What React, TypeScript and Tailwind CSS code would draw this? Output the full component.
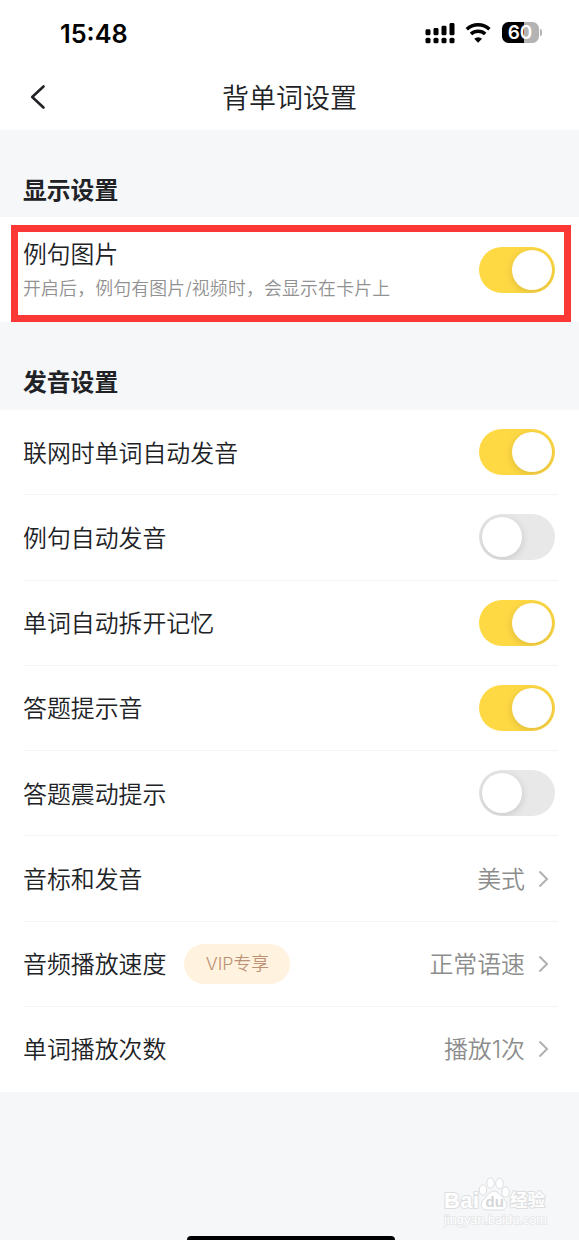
import React, { useState } from "react";

type SettingRow = {
    label: string;
    enabled?: boolean;
    value?: string;
    badge?: string;
};

const rows: SettingRow[] = [
    { label: "联网时单词自动发音", enabled: true },
    { label: "例句自动发音", enabled: false },
    { label: "单词自动拆开记忆", enabled: true },
    { label: "答题提示音", enabled: true },
    { label: "答题震动提示", enabled: false },
    { label: "音标和发音", value: "美式" },
    { label: "音频播放速度", value: "正常语速", badge: "VIP专享" },
    { label: "单词播放次数", value: "播放1次" },
];

// Signal, wifi and battery
function StatusIcons() {
    return (
        <div className="flex items-center">
            <svg width="30" height="22" viewBox="0 0 30 22">
                {[0, 8, 16, 24].map((x, i) => (
                    <g key={x}>
                        <rect x={x + 0.5} y={[7.3, 6, 3.7, 1][i]} width="5" height={[6, 7.3, 9.6, 12.3][i]} rx="1.4" />
                        <rect x={x + 0.5} y="15.7" width="5" height="5.6" rx="1.6" />
                    </g>
                ))}
            </svg>
            <svg className="ml-[10px]" width="27" height="22" viewBox="0 0 27 22" fill="none" stroke="#000" strokeWidth="3.5">
                <path d="M1.8 7.3a16.5 16.5 0 0 1 22.6 0" />
                <path d="M6 12.1a10.3 10.3 0 0 1 14.2 0" />
                <path d="M13.1 20.8l-3.9-4.1a5.7 5.7 0 0 1 7.8 0z" fill="#000" stroke="none" />
            </svg>
            <div className="ml-[10px] flex h-[21px] w-[37px] items-center justify-center rounded-[6.5px] bg-linear-to-r from-black from-60% to-[#b3b3b3] to-60% pr-px font-['Inter',sans-serif] text-[19px] font-semibold leading-none text-white">
                60
            </div>
            <div className="ml-[1px] h-[7px] w-[2px] rounded-r-full bg-[#b3b3b3]" />
        </div>
    );
}

function Toggle({ initial }: { initial: boolean }) {
    const [on, setOn] = useState<boolean>(initial);

    return (
        <button
            role="switch"
            aria-checked={on}
            onClick={() => setOn(!on)}
            className={`flex h-[46px] w-[76px] items-center overflow-hidden rounded-full px-[3px] ${on ? "justify-end bg-[#ffd944]" : "justify-start bg-[#e8e8e8]"}`}
        >
            <span className="h-[40px] w-[40px] rounded-full bg-white shadow-[0_2px_8px_rgba(0,0,0,0.15)]" />
        </button>
    );
}

function SectionTitle({ text }: { text: string }) {
    return <h2 className="pl-[23px] text-[23.8px] font-bold leading-[36px] text-[#202226]">{text}</h2>;
}

function Row({ row, last }: { row: SettingRow; last: boolean }) {
    return (
        <div className={`ml-[23px] mr-[21px] flex h-[85.25px] items-center border-b ${last ? "border-transparent" : "border-[#f3f3f3]"}`}>
            <span className="pt-[3px] text-[23.9px]">{row.label}</span>
            {row.badge ? (
                <span className="ml-[18px] flex h-[40px] w-[106px] items-center justify-center rounded-full bg-[#fff3df] pt-px text-[17.8px] text-[#bd9175]">
                    {row.badge}
                </span>
            ) : null}
            {row.value ? (
                <div className="ml-auto mr-[9px] flex items-center text-[23.9px] text-[#8c8c8c]">
                    <span className="pt-[3px]">{row.value}</span>
                    <svg className="ml-[13px] mt-px" width="11" height="18" viewBox="0 0 11 18" fill="none" stroke="#b0b0b0" strokeWidth="2">
                        <path d="M1.5 1.5L9 9l-7.5 7.5" />
                    </svg>
                </div>
            ) : (
                <div className="ml-auto mr-[3px]">
                    <Toggle initial={row.enabled ?? false} />
                </div>
            )}
        </div>
    );
}

function Watermark() {
    return (
        <div className="ml-[443px] flex h-[52px] w-[110px] flex-col font-['Liberation_Sans','Noto_Sans_CJK_SC',sans-serif] text-white">
            <svg width="110" height="52" viewBox="0 0 110 52" fill="#fff" stroke="#dcdee0" strokeWidth="1">
                <ellipse cx="40" cy="14" rx="3.7" ry="5.2" />
                <ellipse cx="47.5" cy="7" rx="3.8" ry="5.2" />
                <ellipse cx="56.5" cy="7.5" rx="3.8" ry="5.2" />
                <ellipse cx="62.5" cy="16" rx="3.8" ry="5.2" />
                <path d="M51 15c-4 0-6 4-10 8-5 5-3 11 3 11h14c6 0 8-6 3-11-4-4-6-8-10-8z" />
                <g paintOrder="stroke" strokeWidth="2" strokeLinejoin="round" fontWeight="bold">
                    <text x="1" y="32" fontSize="22" textLength="35">Bai</text>
                    <text x="67" y="30" fontSize="17.5">经验</text>
                    <text x="42.5" y="31" fontSize="15" fill="#d4d6d8" stroke="none">du</text>
                </g>
                <text x="1" y="48" fontSize="12" textLength="103" lengthAdjust="spacingAndGlyphs" paintOrder="stroke" stroke="#e4e6e8" strokeWidth="1.5">
                    jingyan.baidu.com
                </text>
            </svg>
        </div>
    );
}

function App() {
    return (
        <div className="flex h-[1240px] w-[579px] flex-col overflow-hidden bg-[#f5f7f9] font-['Inter','Noto_Sans_CJK_SC',sans-serif] font-[350] text-[#202226]">
            {/* Header */}
            <header className="h-[130px] bg-white">
                <div className="flex h-[65px] items-center justify-between pl-[60px] pr-[37px]">
                    <span className="pt-[2px] text-[25.3px] font-semibold text-black">15:48</span>
                    <StatusIcons />
                </div>
                <div className="grid h-[64px] grid-cols-[60px_1fr_60px] items-center">
                    <button className="pl-[30px]">
                        <svg width="16" height="26" viewBox="0 0 16 26" fill="none" stroke="#202226" strokeWidth="2.6" strokeLinecap="round" strokeLinejoin="round">
                            <path d="M13.5 2.500L2.200 13l11.300 10.500" />
                        </svg>
                    </button>
                    <h1 className="pt-[3px] text-center text-[27px] font-[350] leading-[40px]">背单词设置</h1>
                </div>
            </header>

            {/* Display settings */}
            <section>
                <div className="h-[87px] pt-[43px]">
                    <SectionTitle text="显示设置" />
                </div>
                <div className="h-[105px] bg-white pl-[11px] pr-[8px] pt-[8px]">
                    <div className="flex h-[97px] items-center justify-between border-[7px] border-[#fc3837] pl-[5px] pr-[9px]">
                        <div className="pb-[6px]">
                            <p className="text-[23.8px] leading-[36px]">例句图片</p>
                            <p className="text-[17.85px] leading-[31px] tracking-[0.2px] text-[#919191]">开启后，例句有图片/视频时，会显示在卡片上</p>
                        </div>
                        <div className="pb-[7px]">
                            <Toggle initial={true} />
                        </div>
                    </div>
                </div>
            </section>

            {/* Pronunciation settings */}
            <section>
                <div className="h-[88px] pt-[43px]">
                    <SectionTitle text="发音设置" />
                </div>
                <div className="h-[682px] bg-white">
                    {rows.map((row, i) => (
                        <Row key={row.label} row={row} last={i === rows.length - 1} />
                    ))}
                </div>
            </section>

            <footer className="flex h-[148px] flex-col justify-between pt-[84px]">
                <Watermark />
                <div className="ml-[187px] h-[4px] w-[208px] rounded-t-[4px] bg-black" />
            </footer>
        </div>
    );
}

export default App;
